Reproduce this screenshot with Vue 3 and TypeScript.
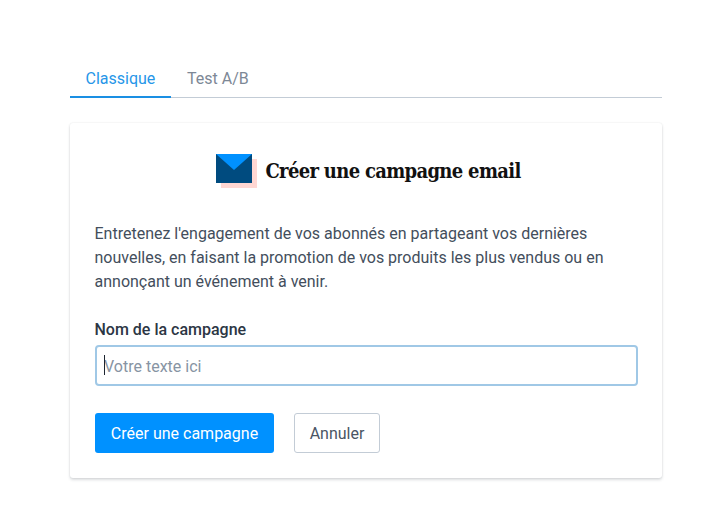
<script setup lang="ts">
const tabs = ['Classique', 'Test A/B'];
</script>

<template>
  <div class="page">
    <div class="tabs">
      <div v-for="(tab, i) in tabs" :key="tab" class="tab" :class="{ active: i === 0 }">{{ tab }}</div>
    </div>

    <div class="card">
      <div class="heading">
        <svg class="envelope" width="41" height="34" viewBox="0 0 41 34">
          <rect x="5" y="5" width="36" height="29" fill="#ffd7d3" />
          <rect x="0" y="0" width="36" height="29" fill="#004b7f" />
          <path d="M0 0H36L18 16Z" fill="#0091ff" />
        </svg>
        <h1 class="title">Créer une campagne email</h1>
      </div>

      <p class="intro">
        Entretenez l'engagement de vos abonnés en partageant vos dernières
        nouvelles, en faisant la promotion de vos produits les plus vendus ou en
        annonçant un événement à venir.
      </p>

      <label class="label" for="name">Nom de la campagne</label>
      <div class="field">
        <input id="name" class="input" type="text" placeholder="Votre texte ici" />
        <span class="caret"></span>
      </div>

      <div class="actions">
        <button class="btn primary" type="button">Créer une campagne</button>
        <button class="btn ghost" type="button">Annuler</button>
      </div>
    </div>
  </div>
</template>

<style scoped>
.page {
  width: 721px;
  height: 528px;
  box-sizing: border-box;
  padding: 60px 59px 0 70px;
  background: #fff;
  font-family: Roboto, sans-serif;
  color: #3c4858;
}

.tabs {
  display: flex;
  height: 38px;
  box-sizing: border-box;
  border-bottom: 1px solid #c3ccd6;
}

.tab {
  height: 38px;
  box-sizing: border-box;
  padding: 10px 16px 0;
  font-size: 16px;
  line-height: 18px;
  color: #7d8896;
}

.tab.active {
  width: 101px;
  padding-left: 15.5px;
  color: #2696e8;
  border-bottom: 2px solid #1a8fe3;
}

.card {
  margin-top: 25px;
  height: 355px;
  box-sizing: border-box;
  padding: 31px 24px 0 25px;
  border-radius: 3px;
  background: #fff;
  box-shadow: 0 0 2px rgba(40, 50, 60, 0.12), 0 2px 3px rgba(40, 50, 60, 0.16);
}

.heading {
  display: flex;
  align-items: center;
  justify-content: center;
  gap: 8px;
  padding-left: 4px;
  height: 34px;
}

.envelope {
  flex: none;
}

.title {
  margin: 0;
  font-family: "DejaVu Serif", serif;
  font-stretch: condensed;
  font-weight: 700;
  font-size: 20px;
  letter-spacing: -0.68px;
  color: #111;
}

.intro {
  margin: 34px 0 0 -0.5px;
  font-size: 16px;
  line-height: 24px;
  color: #434e5c;
}

.label {
  display: block;
  margin: 26px 0 0 -0.5px;
  font-size: 16px;
  line-height: 20px;
  font-weight: 500;
  color: #2c3644;
}

.field {
  position: relative;
  margin-top: 5px;
}

.input {
  display: block;
  width: 100%;
  height: 41px;
  box-sizing: border-box;
  padding: 2px 7px 0;
  border: 2px solid #a0c8e6;
  border-radius: 4px;
  outline: none;
  font-family: inherit;
  font-size: 16px;
  color: #3c4858;
}

.input::placeholder {
  color: #8794a3;
  opacity: 1;
}

.caret {
  position: absolute;
  left: 9px;
  top: 10px;
  width: 1px;
  height: 20px;
  background: #1c2530;
}

.actions {
  display: flex;
  gap: 20px;
  margin-top: 27px;
}

.btn {
  height: 40px;
  box-sizing: border-box;
  border-radius: 3px;
  font-family: inherit;
  font-size: 16px;
}

.primary {
  width: 179px;
  border: none;
  background: #0091ff;
  color: #fff;
  font-weight: 400;
}

.ghost {
  width: 86px;
  border: 1px solid #c3ccd6;
  background: #fff;
  color: #4a5564;
}
</style>
